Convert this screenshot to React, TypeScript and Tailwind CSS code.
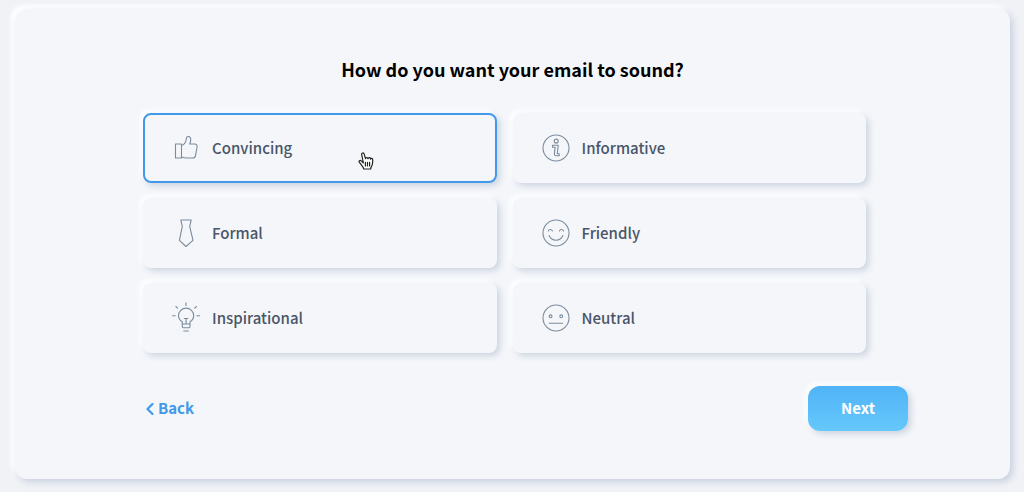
import { useState } from 'react';
import type { ReactNode } from 'react';

type IconProps = {
  children: ReactNode;
};

const Icon = ({ children }: IconProps) => (
  <svg
    viewBox="0 0 28 28"
    className="size-7 shrink-0 overflow-visible"
    fill="none"
    stroke="#7b8c9d"
    strokeWidth="1.1"
    strokeLinecap="round"
    strokeLinejoin="round"
    aria-hidden="true"
  >
    {children}
  </svg>
);

const ThumbIcon = () => (
  <Icon>
    <path d="M3.5 10h6v14h-6z" />
    <path d="M9.500 11.500c3-1 4.500-3.500 4.800-6.500.1-1.600.8-2.500 2-2.500 1.800 0 2.600 1.600 2.400 3.600-.1 1.200-.5 2.600-1 3.900h4.800c2 0 2.900 1.200 2.600 3l-1.600 8.600c-.3 1.700-1.200 2.400-2.900 2.400h-6c-2 0-3.400-.4-5.100-1.100" />
  </Icon>
);

const TieIcon = () => (
  <Icon>
    <path d="M8.800 1h10.400l-1.500 6.300 3.300 14.100L14 27.500l-6.600-6.100L10.300 7.300z" />
  </Icon>
);

const BulbIcon = () => (
  <Icon>
    <path d="M10.300 17.800C8 16.300 6.500 14.300 6.500 11.700a7.600 7.600 0 0 1 15.200 0c0 2.600-1.400 4.600-3.700 6.100v4.600c0 .9-.5 1.400-1.400 1.400h-4.800c-.9 0-1.500-.5-1.500-1.400z" />
    <path d="M10.300 20H18M12.300 14.500h3.600M14.100 14.500V20M11.800 27h4.600M14 1.500V-1.300M5.600 4.100 3.900 2.500M22.700 4.100l1.700-1.600M3.200 11.700H.5M24.900 11.700h2.700" />
  </Icon>
);

const InfoIcon = () => (
  <Icon>
    <circle cx="14" cy="14" r="13" />
    <circle cx="14.200" cy="7.100" r="2" />
    <path d="M10.500 11.200h5.700l-.9 8.600h1.900v2h-2.800c-1.500 0-2.100-.8-2-2.200l.7-6.300h-2.600z" />
  </Icon>
);

const SmileIcon = () => (
  <Icon>
    <circle cx="14" cy="14" r="13" />
    <path d="M6.300 12c.8-2 3.300-2 4.100 0M17.400 12c.8-2 3.300-2 4.100 0M7.100 16.500c2.700 6.300 11.100 6.300 13.800 0" />
  </Icon>
);

const NeutralIcon = () => (
  <Icon>
    <circle cx="14" cy="14" r="13" />
    <circle cx="8.600" cy="12.300" r="1.400" />
    <circle cx="19.200" cy="12.300" r="1.400" />
    <path d="M7.200 19.300h13.500" />
  </Icon>
);

const HandPointer = () => (
  <svg
    viewBox="0 0 16 18"
    className="absolute left-[213px] top-[37px] w-4 h-[18px] pointer-events-none"
    fill="#fff"
    stroke="#222"
    strokeWidth="1.2"
    strokeLinejoin="round"
    strokeLinecap="round"
    aria-hidden="true"
  >
    <path d="M5.400 11 3.300 8.900C2 7.900.5 9 1.300 10.200l3.500 4.700c.5.700.8 1.300.9 2.100h7c0-1.200.5-2 1-3 .8-1.500 1-3 1-4.500V7.800c0-1.700-2-1.800-2.200-.6.100-1.800-2.300-2-2.500-.5-.1-1.500-2.400-1.500-2.500 0L6.200 2.100C5.700.3 3.300.8 3.700 2.700z" />
    <path d="M7.400 10.300v3.600M9.500 10.300v3.600M11.600 10.300v3.600" />
  </svg>
);

const tones = [
  { name: 'Convincing', icon: <ThumbIcon /> },
  { name: 'Informative', icon: <InfoIcon /> },
  { name: 'Formal', icon: <TieIcon /> },
  { name: 'Friendly', icon: <SmileIcon /> },
  { name: 'Inspirational', icon: <BulbIcon /> },
  { name: 'Neutral', icon: <NeutralIcon /> },
];

const App = () => {
  const [selected, setSelected] = useState('Convincing');

  return (
    <div className="min-h-screen bg-[#f0f2f6] pl-[15px] pr-[14px] pt-[9px] pb-[13px] font-['Noto_Sans_CJK_SC','Noto_Sans',sans-serif]">
      <main className="rounded-xl bg-[#f4f6fa] pl-32 pr-[102px] py-12 shadow-[3px_3px_7px_#c8d0de,-3px_-3px_4px_1px_#ffffff]">
        <h1 className="-ml-[26px] text-center text-lg leading-6 font-bold text-black">
          How do you want your email to sound?
        </h1>
        <div className="mt-8 mr-[42px] grid grid-cols-2 gap-x-4 gap-y-[15px]">
          {tones.map((tone) => (
            <button
              key={tone.name}
              type="button"
              aria-pressed={selected === tone.name}
              onClick={() => setSelected(tone.name)}
              className={`relative flex h-[70px] items-center gap-3 rounded-lg border-2 pl-[27px] text-[15px] font-medium text-[#4a5568] shadow-[3px_3px_6px_#cdd5e0,-3px_-3px_5px_#ffffff] ${
                selected === tone.name ? 'border-[#4299e9]' : 'border-transparent'
              }`}
            >
              {tone.icon}
              {tone.name}
              {tone.name === 'Convincing' && <HandPointer />}
            </button>
          ))}
        </div>
        <div className="mt-[33px] flex items-center justify-between">
          <a href="#" className="flex items-center gap-1 pl-[3px] text-[15px] font-bold text-[#4299e9]">
            <svg
              viewBox="0 0 8 12"
              className="w-2 h-3"
              fill="none"
              stroke="currentColor"
              strokeWidth="2.2"
              strokeLinecap="round"
              strokeLinejoin="round"
              aria-hidden="true"
            >
              <path d="M6.500 1 1.500 6l5 5" />
            </svg>
            Back
          </a>
          <button
            type="button"
            className="h-[45px] w-[100px] rounded-xl bg-linear-to-b from-[#50b3f7] to-[#66c8fa] text-[15px] font-bold text-white shadow-[3px_3px_6px_#cdd5e0,-3px_-3px_5px_#ffffff]"
          >
            Next
          </button>
        </div>
      </main>
    </div>
  );
};

export default App;
